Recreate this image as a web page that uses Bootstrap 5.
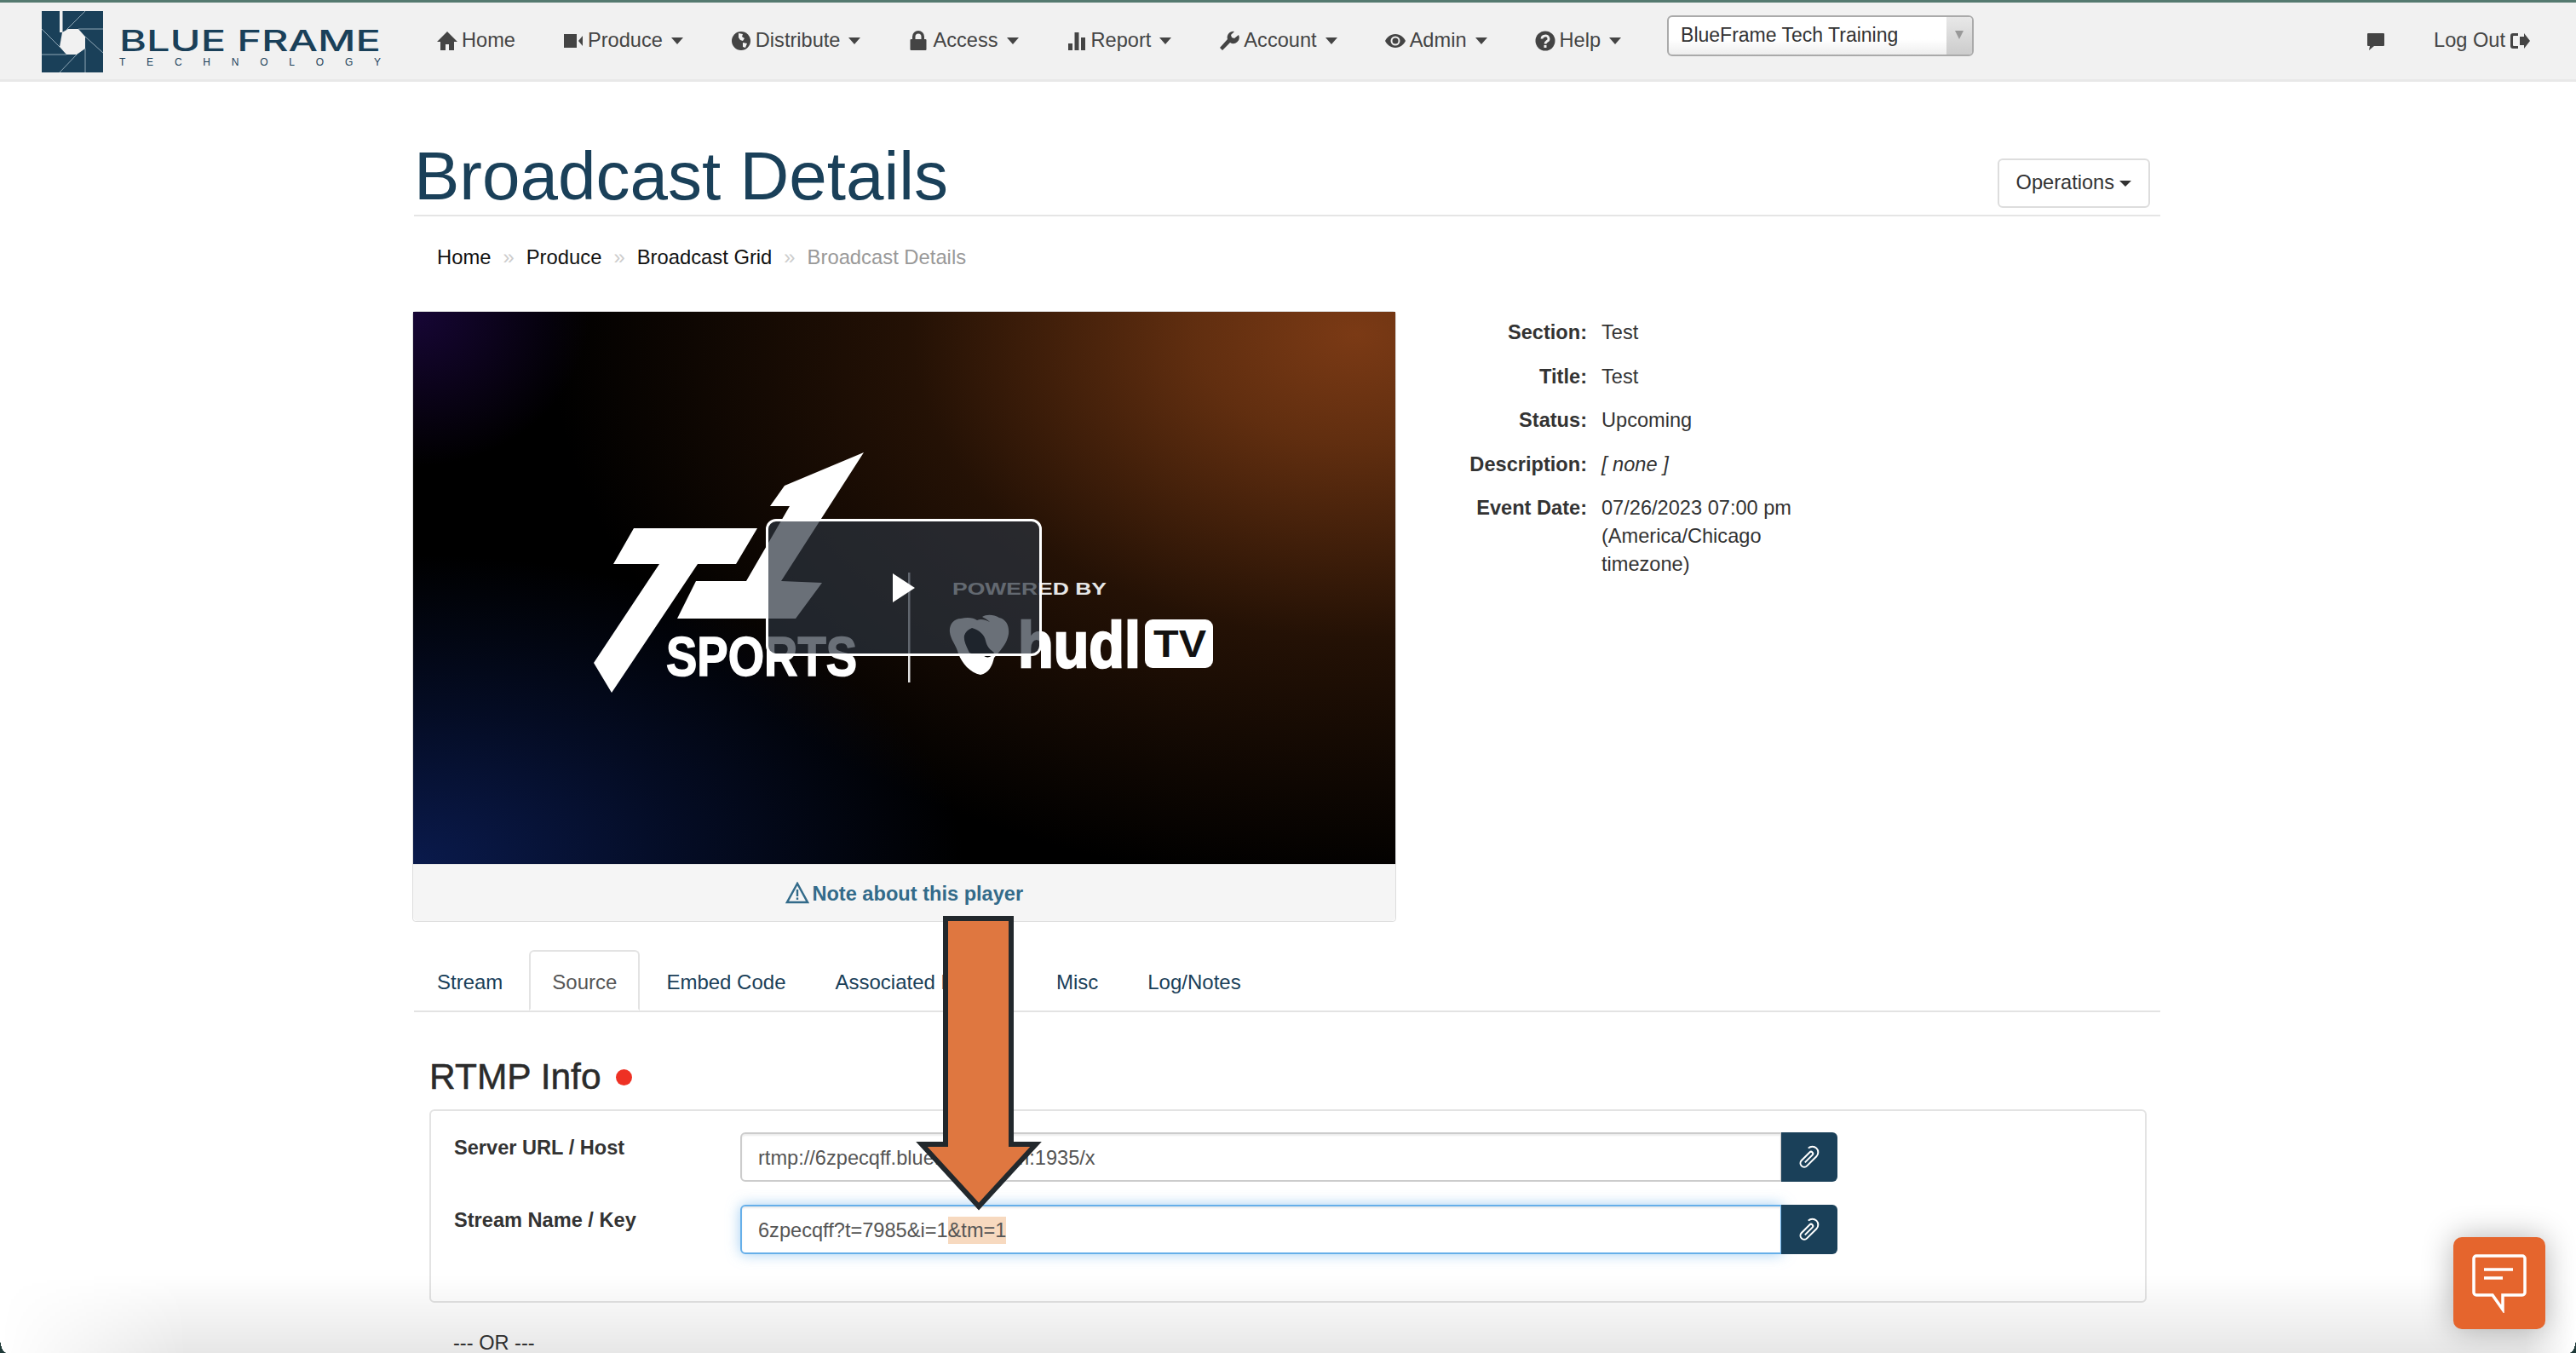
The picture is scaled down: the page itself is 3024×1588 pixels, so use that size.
<!DOCTYPE html>
<html lang="en">
<head>
  <meta charset="UTF-8">
  <meta name="viewport" content="width=device-width, initial-scale=1">
  <title>Broadcast Details</title>
  <link href="https://cdn.jsdelivr.net/npm/bootstrap@5.3.0/dist/css/bootstrap.min.css" rel="stylesheet">
  <style>
    html, body { height: 100%; overflow: hidden; }
    body { position: relative; font-family: "Liberation Sans", Arial, sans-serif; font-size: 23.6px; line-height: 33px; color: #333; background: #fff; }

    /* top bar */
    .top-bar { height: 96px; padding: 0 !important; align-items: flex-start; flex-wrap: nowrap; background: #f1f1f1; border-top: 3px solid #557a70; border-bottom: 3px solid #e8e8e8; }
    .brand-logo { display: block; margin: 10px 0 0 49px; padding: 0; width: 400px; height: 76px; }
    .top-links { flex-direction: row; margin: 28px 0 0 36px; }
    .top-links .nav-link { display: flex; align-items: center; gap: 5px; padding: 0 28px; line-height: 33px; color: #444; white-space: nowrap; }
    .top-links .nav-link svg { width: 24px; height: 24px; fill: #444; flex: none; }
    .top-links .dropdown-toggle::after { margin-left: 5px; border-width: 8px 7px 0; border-color: #444 transparent transparent; }
    .org-select { display: flex; width: 360px; height: 48px; margin: 15px 0 0 26px; font-size: 23px; color: #333; background: linear-gradient(#fff 60%, #eee); border: 2px solid #aaa; border-radius: 6px; }
    .org-select span { flex: 1; padding: 5px 0 0 14px; }
    .org-select i { width: 30px; background: linear-gradient(#e8e8e8, #ccc); border-radius: 0 4px 4px 0; position: relative; }
    .org-select i::after { content: ""; position: absolute; left: 10px; top: 16px; border: solid transparent; border-width: 10px 5px 0; border-top-color: #999; }
    .top-right { margin: 28px 54px 0 auto; gap: 56px; }
    .top-right svg { width: 24px; height: 24px; fill: #444; }
    .logout-link { display: flex; align-items: center; gap: 5px; color: #444; text-decoration: none; }

    /* page */
    .page-wrap { width: 2050px; margin-left: 486px; }
    .page-head { padding-top: 66px; border-bottom: 2px solid #e5e5e5; }
    .page-head h1 { margin: 0; font-size: 80px; line-height: 90px; font-weight: 400; color: #1a4059; }
    .ops-btn { align-self: flex-start; margin: 24px 12px 0 0; padding: 0 20px; height: 58px; font-size: 23.6px; color: #333; background: #fff; border: 2px solid #ddd; border-radius: 6px; }
    .ops-btn::after { border-width: 7px 7px 0; border-color: #333 transparent transparent; vertical-align: 3px; }
    .crumbs { --bs-breadcrumb-divider: "»"; --bs-breadcrumb-margin-bottom: 0; --bs-breadcrumb-item-padding-x: 14px; margin: 31px 0 47px 27px; font-size: 23.8px; }
    .crumbs a { color: #111; text-decoration: none; }
    .crumbs .breadcrumb-item::before { color: #ccc; }
    .crumbs .active { color: #999; }

    .player-card { width: 1155px; margin-left: -2px; border: 1px solid #ddd; border-radius: 4px; }
    .player-frame { position: relative; height: 648px; overflow: hidden; background:
      radial-gradient(82% 100% at 96% 4%, #7b3a15 0%, rgba(105,50,17,.92) 20%, rgba(50,24,7,.72) 55%, rgba(0,0,0,0) 100%),
      radial-gradient(56% 56% at 0 100%, #0a1a4c 0%, rgba(7,20,60,.6) 50%, rgba(0,0,0,0) 100%),
      radial-gradient(18% 28% at 0 0, #170636, rgba(0,0,0,0)),
      #000; }
    .player-frame svg { display: block; }
    .play-box { position: absolute; left: 414px; top: 243px; width: 324px; height: 161px; display: flex; align-items: center; justify-content: center; background: rgba(43,51,63,.7); border: 3px solid #fff; border-radius: 12px; }
    .play-box::after { content: ""; border: solid transparent; border-width: 17px 0 17px 26px; border-left-color: #fff; }
    .player-note { height: 67px; padding: 0; line-height: 68px; text-align: center; font-weight: 700; color: #336b8a; background: #f5f5f5; border-top: 1px solid #e6e6e6; }
    .player-note svg { width: 28px; height: 26px; margin-right: -3px; vertical-align: -4px; }
    .info-list { display: grid; grid-template-columns: 200px 240px; column-gap: 17px; row-gap: 18.5px; align-content: start; margin: 9px 0 0 24px; }
    .info-list dt { font-weight: 700; text-align: right; }
    .info-list dd { margin: 0; }

    .page-tabs { --bs-nav-tabs-border-width: 2px; --bs-nav-tabs-border-color: #e3e3e3; --bs-nav-tabs-border-radius: 6px; margin-top: 33px; gap: 4px; }
    .page-tabs .nav-link { margin: 0; padding: 19px 25px 15px; line-height: 33px; font-size: 24px; color: #1a4059; }
    .page-tabs .nav-link.active { color: #555; border-color: #e3e3e3 #e3e3e3 #fff; }
    .page-tabs .tab-wide { margin-right: 4px; }

    .section-title { margin: 53px 0 15px 18px; font-size: 42.5px; line-height: 46px; font-weight: 400; color: #2b2b2b; -webkit-text-stroke: .5px #2b2b2b; display: flex; align-items: center; gap: 17px; }
    .live-dot { width: 19px; height: 19px; border-radius: 50%; background: #ee3124; }
    .rtmp-panel { width: 2016px; height: 227px; margin-left: 18px; padding: 25px 0 0 27px; border: 2px solid #e3e3e3; border-radius: 6px; }
    .field-row { display: flex; height: 58px; margin-bottom: 27px; }
    .field-row label { width: 336px; padding-top: 2px; font-weight: 700; }
    .url-group { width: 1288px; flex-wrap: nowrap; }
    .url-field { height: 58px; padding: 10px 19px; font-size: 23.6px; line-height: 36px; color: #555; border: 2px solid #ccc; border-radius: 6px 0 0 6px; white-space: nowrap; box-shadow: inset 0 2px 2px rgba(0,0,0,.075); }
    .url-field.is-focus { border-color: #66afe9; box-shadow: inset 0 2px 2px rgba(0,0,0,.075), 0 0 16px rgba(102,175,233,.6); }
    .sel-text { background: #f7d9bf; padding: 3px 0; }
    .clip-btn { width: 66px; height: 58px; padding: 0; display: flex; align-items: center; justify-content: center; background: #1a4059; border: 0; border-radius: 0 6px 6px 0; }
    .clip-btn svg { width: 36px; height: 36px; margin-right: 4px; }
    .or-line { margin: 31px 0 0 46px; }

    /* overlays */
    .callout-arrow { position: absolute; left: 1070px; top: 1070px; width: 160px; height: 360px; }
    .chat-btn { position: absolute; left: 2880px; top: 1452px; width: 108px; height: 108px; display: flex; align-items: center; justify-content: center; background: #e5652d; border: 0; border-radius: 10px; box-shadow: 0 0 36px rgba(0,0,0,.3); z-index: 3; }
    .chat-btn svg { width: 64px; height: 70px; }
    .bottom-fade { position: absolute; left: 0; right: 0; bottom: 0; height: 92px; pointer-events: none; background: linear-gradient(to top, rgba(0,0,0,.095), rgba(0,0,0,0)); -webkit-mask-image: linear-gradient(to right, transparent, #000 220px, #000 calc(100% - 60px), transparent); z-index: 2; }
    .corner-l, .corner-r { position: absolute; bottom: 0; width: 8px; height: 18px; z-index: 4; }
    .corner-l { left: 0; background: radial-gradient(ellipse 8px 18px at 100% 0, transparent 98%, #1f3a38 100%); }
    .corner-r { right: 0; background: radial-gradient(ellipse 8px 18px at 0 0, transparent 98%, #1f3a38 100%); }
  </style>
</head>
<body>
  <nav class="navbar top-bar">
    <svg class="brand-logo" viewBox="0 0 400 76">
      <rect width="72" height="72" fill="#1a4059"/>
      <rect x="21" width="3.5" height="25" fill="#f1f1f1"/>
      <polygon points="24,25 31,21 43,21 51,30 51,44 41,51 29,51 21,42" fill="#f1f1f1"/>
      <g stroke="#8fa6b5" stroke-width="1" fill="none">
        <path d="M51 0 29 22M43 21H72M51 30 72 49M51 44V72M41 51 21 72M29 51H0M21 42 0 21"/>
      </g>
      <text x="91" y="47" font-family="Inter, 'Liberation Sans', sans-serif" font-weight="500" font-size="34" fill="#1a4059" textLength="307" lengthAdjust="spacingAndGlyphs">BLUE FRAME</text>
      <text x="91" y="64" font-family="'Liberation Sans', sans-serif" font-size="12" fill="#1a4059" textLength="307">TECHNOLOGY</text>
    </svg>

    <div class="navbar-nav top-links">
      <a class="nav-link" href="#"><svg viewBox="0 0 24 24"><path d="M12 1 0 13h4v10h6v-7h4v7h6V13h4z"/></svg>Home</a>
      <a class="nav-link dropdown-toggle" href="#"><svg viewBox="0 0 24 24"><path d="M1 4h15v16H1zM18 12l5-6v12z"/></svg>Produce</a>
      <a class="nav-link dropdown-toggle" href="#"><svg viewBox="0 0 24 24"><circle cx="12" cy="12" r="11"/><path d="M9 3l5 1-1 3 3 2-2 3-3-1-2-3zM14 14l5 1-2 5-3-1z" fill="#f1f1f1"/></svg>Distribute</a>
      <a class="nav-link dropdown-toggle" href="#"><svg viewBox="0 0 24 24"><path fill-rule="evenodd" d="M5 10V7a7 7 0 0 1 14 0v3h1.500a1 1 0 0 1 1 1v11a1 1 0 0 1-1 1h-17a1 1 0 0 1-1-1V11a1 1 0 0 1 1-1zM8.500 10h7V7a3.500 3.500 0 0 0-7 0z"/></svg>Access</a>
      <a class="nav-link dropdown-toggle" href="#"><svg viewBox="0 0 24 24"><path d="M2 15h5v8H2zM9.500 2h5v21h-5zM17 8h5v15h-5z"/></svg>Report</a>
      <a class="nav-link dropdown-toggle" href="#"><svg viewBox="0 0 24 24"><path d="M23 5l-5 4-3-1-1-3 4-4a7 7 0 0 0-8 9L1 20l3 3 9-9a7 7 0 0 0 10-9z"/></svg>Account</a>
      <a class="nav-link dropdown-toggle" href="#"><svg viewBox="0 0 24 24"><path fill-rule="evenodd" d="M12 4C6 4 2 8 0 12c2 4 6 8 12 8s10-4 12-8c-2-4-6-8-12-8zm0 2.500a5.500 5.500 0 1 1 0 11 5.500 5.500 0 0 1 0-11z"/><circle cx="12" cy="12" r="3.500"/></svg>Admin</a>
      <a class="nav-link dropdown-toggle" href="#"><svg viewBox="0 0 24 24"><circle cx="12" cy="12" r="11.500"/><path d="M8 9.500a4 3.500 0 1 1 6 3c-1.500 1-2 1.500-2 3" fill="none" stroke="#f1f1f1" stroke-width="2.800"/><rect x="10.500" y="17" width="3" height="3" fill="#f1f1f1"/></svg>Help</a>
    </div>

    <div class="org-select"><span>BlueFrame Tech Training</span><i></i></div>

    <div class="d-flex align-items-center top-right">
      <svg viewBox="0 0 24 24"><path d="M3 3h18a1 1 0 0 1 1 1v13a1 1 0 0 1-1 1H10l-6 5 1-5H3a1 1 0 0 1-1-1V4a1 1 0 0 1 1-1z"/></svg>
      <a class="logout-link" href="#">Log Out <svg viewBox="0 0 24 24"><path d="M10 3H4a3 3 0 0 0-3 3v12a3 3 0 0 0 3 3h6v-3H5a1 1 0 0 1-1-1V7a1 1 0 0 1 1-1h5z"/><path d="M12 7h5V3l7 9-7 9v-4h-5z"/></svg></a>
    </div>
  </nav>

  <main class="page-wrap">
    <div class="page-head d-flex justify-content-between">
      <h1>Broadcast Details</h1>
      <button class="btn ops-btn dropdown-toggle" type="button">Operations</button>
    </div>

    <ol class="breadcrumb crumbs">
      <li class="breadcrumb-item"><a href="#">Home</a></li>
      <li class="breadcrumb-item"><a href="#">Produce</a></li>
      <li class="breadcrumb-item"><a href="#">Broadcast Grid</a></li>
      <li class="breadcrumb-item active">Broadcast Details</li>
    </ol>

    <div class="d-flex">
      <div class="card player-card">
        <div class="player-frame">
          <svg width="1153" height="648" viewBox="484 365 1153 648">
            <g fill="#fff">
              <polygon points="743,619 888,619 863,661 818,661 717,812 696,777 773,661 719,661"/>
              <polygon points="1013,530 916,681 964,683 933,725 794,725 816,681 875,681 926,593 903,593 920,569"/>
              <text x="781" y="792" font-family="'Liberation Sans', sans-serif" font-weight="700" font-size="64" textLength="224" lengthAdjust="spacingAndGlyphs" stroke="#fff" stroke-width="1.500">SPORTS</text>
              <rect x="1065" y="671" width="2.500" height="129" fill="#ddd"/>
              <text x="1117" y="697" font-family="'Liberation Sans', sans-serif" font-weight="700" font-size="21" textLength="181" lengthAdjust="spacingAndGlyphs" fill="#e6e6e6">POWERED BY</text>
              <path d="M1127 725c-9 0-14 8-13 16 1 9 7 14 10 25 4 11 14 23 26 25 10-2 14-11 16-20 7-8 15-16 17-28 1-10-3-17-11-19-7-4-15-4-20-1 2 1 6 3 9 6-6-3-11-4-15-2-4-3-11-4-19-2z"/>
              <text x="1194" y="782" font-family="'Liberation Sans', sans-serif" font-weight="700" font-size="76" textLength="144" lengthAdjust="spacingAndGlyphs" stroke="#fff" stroke-width="2.500">hudl</text>
              <rect x="1343" y="726" width="80" height="57" rx="9"/>
              <text x="1353" y="770" font-family="'Liberation Sans', sans-serif" font-weight="700" font-size="44" textLength="62" lengthAdjust="spacingAndGlyphs" fill="#111">TV</text>
            </g>
            <path d="M1140 736c8 2 15 8 16 15 2 8 6 11 10 14-3 6-9 7-13 3-5-3-11 0-16-3-4-8-7-14-6-20 1-4 4-7 9-9z" fill="#000"/>
          </svg>
          <div class="play-box"></div>
        </div>
        <div class="card-footer player-note">
          <svg viewBox="0 0 28 26"><path d="M14 2 2 24h24z" fill="none" stroke="#336b8a" stroke-width="2.500"/><path d="M12.800 9h2.400v8h-2.400zM12.800 18.500h2.400V21h-2.400z" fill="#336b8a"/></svg>
          Note about this player
        </div>
      </div>

      <dl class="info-list">
        <dt>Section:</dt><dd>Test</dd>
        <dt>Title:</dt><dd>Test</dd>
        <dt>Status:</dt><dd>Upcoming</dd>
        <dt>Description:</dt><dd><em>[ none ]</em></dd>
        <dt>Event Date:</dt><dd>07/26/2023 07:00 pm (America/Chicago timezone)</dd>
      </dl>
    </div>

    <ul class="nav nav-tabs page-tabs">
      <li class="nav-item"><a class="nav-link" href="#">Stream</a></li>
      <li class="nav-item"><a class="nav-link active" href="#">Source</a></li>
      <li class="nav-item"><a class="nav-link" href="#">Embed Code</a></li>
      <li class="nav-item tab-wide"><a class="nav-link" href="#">Associated Events</a></li>
      <li class="nav-item"><a class="nav-link" href="#">Misc</a></li>
      <li class="nav-item"><a class="nav-link" href="#">Log/Notes</a></li>
    </ul>

    <h3 class="section-title">RTMP Info <span class="live-dot"></span></h3>

    <div class="rtmp-panel">
      <div class="field-row">
        <label>Server URL / Host</label>
        <div class="input-group url-group">
          <div class="form-control url-field">rtmp://6zpecqff.blueframe.com:1935/x</div>
          <button class="btn clip-btn" type="button"><svg viewBox="0 0 32 32" fill="none" stroke="#fff" stroke-width="1.800"><path transform="rotate(45 16 16)" d="M10 9a6 6 0 0 1 12 0v14a4 4 0 0 1-8 0V11a2 2 0 0 1 4 0v11"/></svg></button>
        </div>
      </div>
      <div class="field-row">
        <label>Stream Name / Key</label>
        <div class="input-group url-group">
          <div class="form-control url-field is-focus">6zpecqff?t=7985&amp;i=1<span class="sel-text">&amp;tm=1</span></div>
          <button class="btn clip-btn" type="button"><svg viewBox="0 0 32 32" fill="none" stroke="#fff" stroke-width="1.800"><path transform="rotate(45 16 16)" d="M10 9a6 6 0 0 1 12 0v14a4 4 0 0 1-8 0V11a2 2 0 0 1 4 0v11"/></svg></button>
        </div>
      </div>
    </div>

    <p class="or-line">--- OR ---</p>
  </main>

  <svg class="callout-arrow" viewBox="1070 1070 160 360"><path d="M1110 1078h77v265h29l-67 73-67-73h28z" fill="#df7740" stroke="#22282c" stroke-width="6"/></svg>

  <button class="chat-btn" type="button" aria-label="Chat">
    <svg viewBox="0 0 64 70" fill="none" stroke="#fff" stroke-width="3.500"><path d="M5 3h54a3 3 0 0 1 3 3v40a3 3 0 0 1-3 3H36v17L24 49H5a3 3 0 0 1-3-3V6a3 3 0 0 1 3-3z"/><path d="M14 19h34M14 29h22"/></svg>
  </button>

  <div class="bottom-fade"></div>
  <div class="corner-l"></div>
  <div class="corner-r"></div>
</body>
</html>
